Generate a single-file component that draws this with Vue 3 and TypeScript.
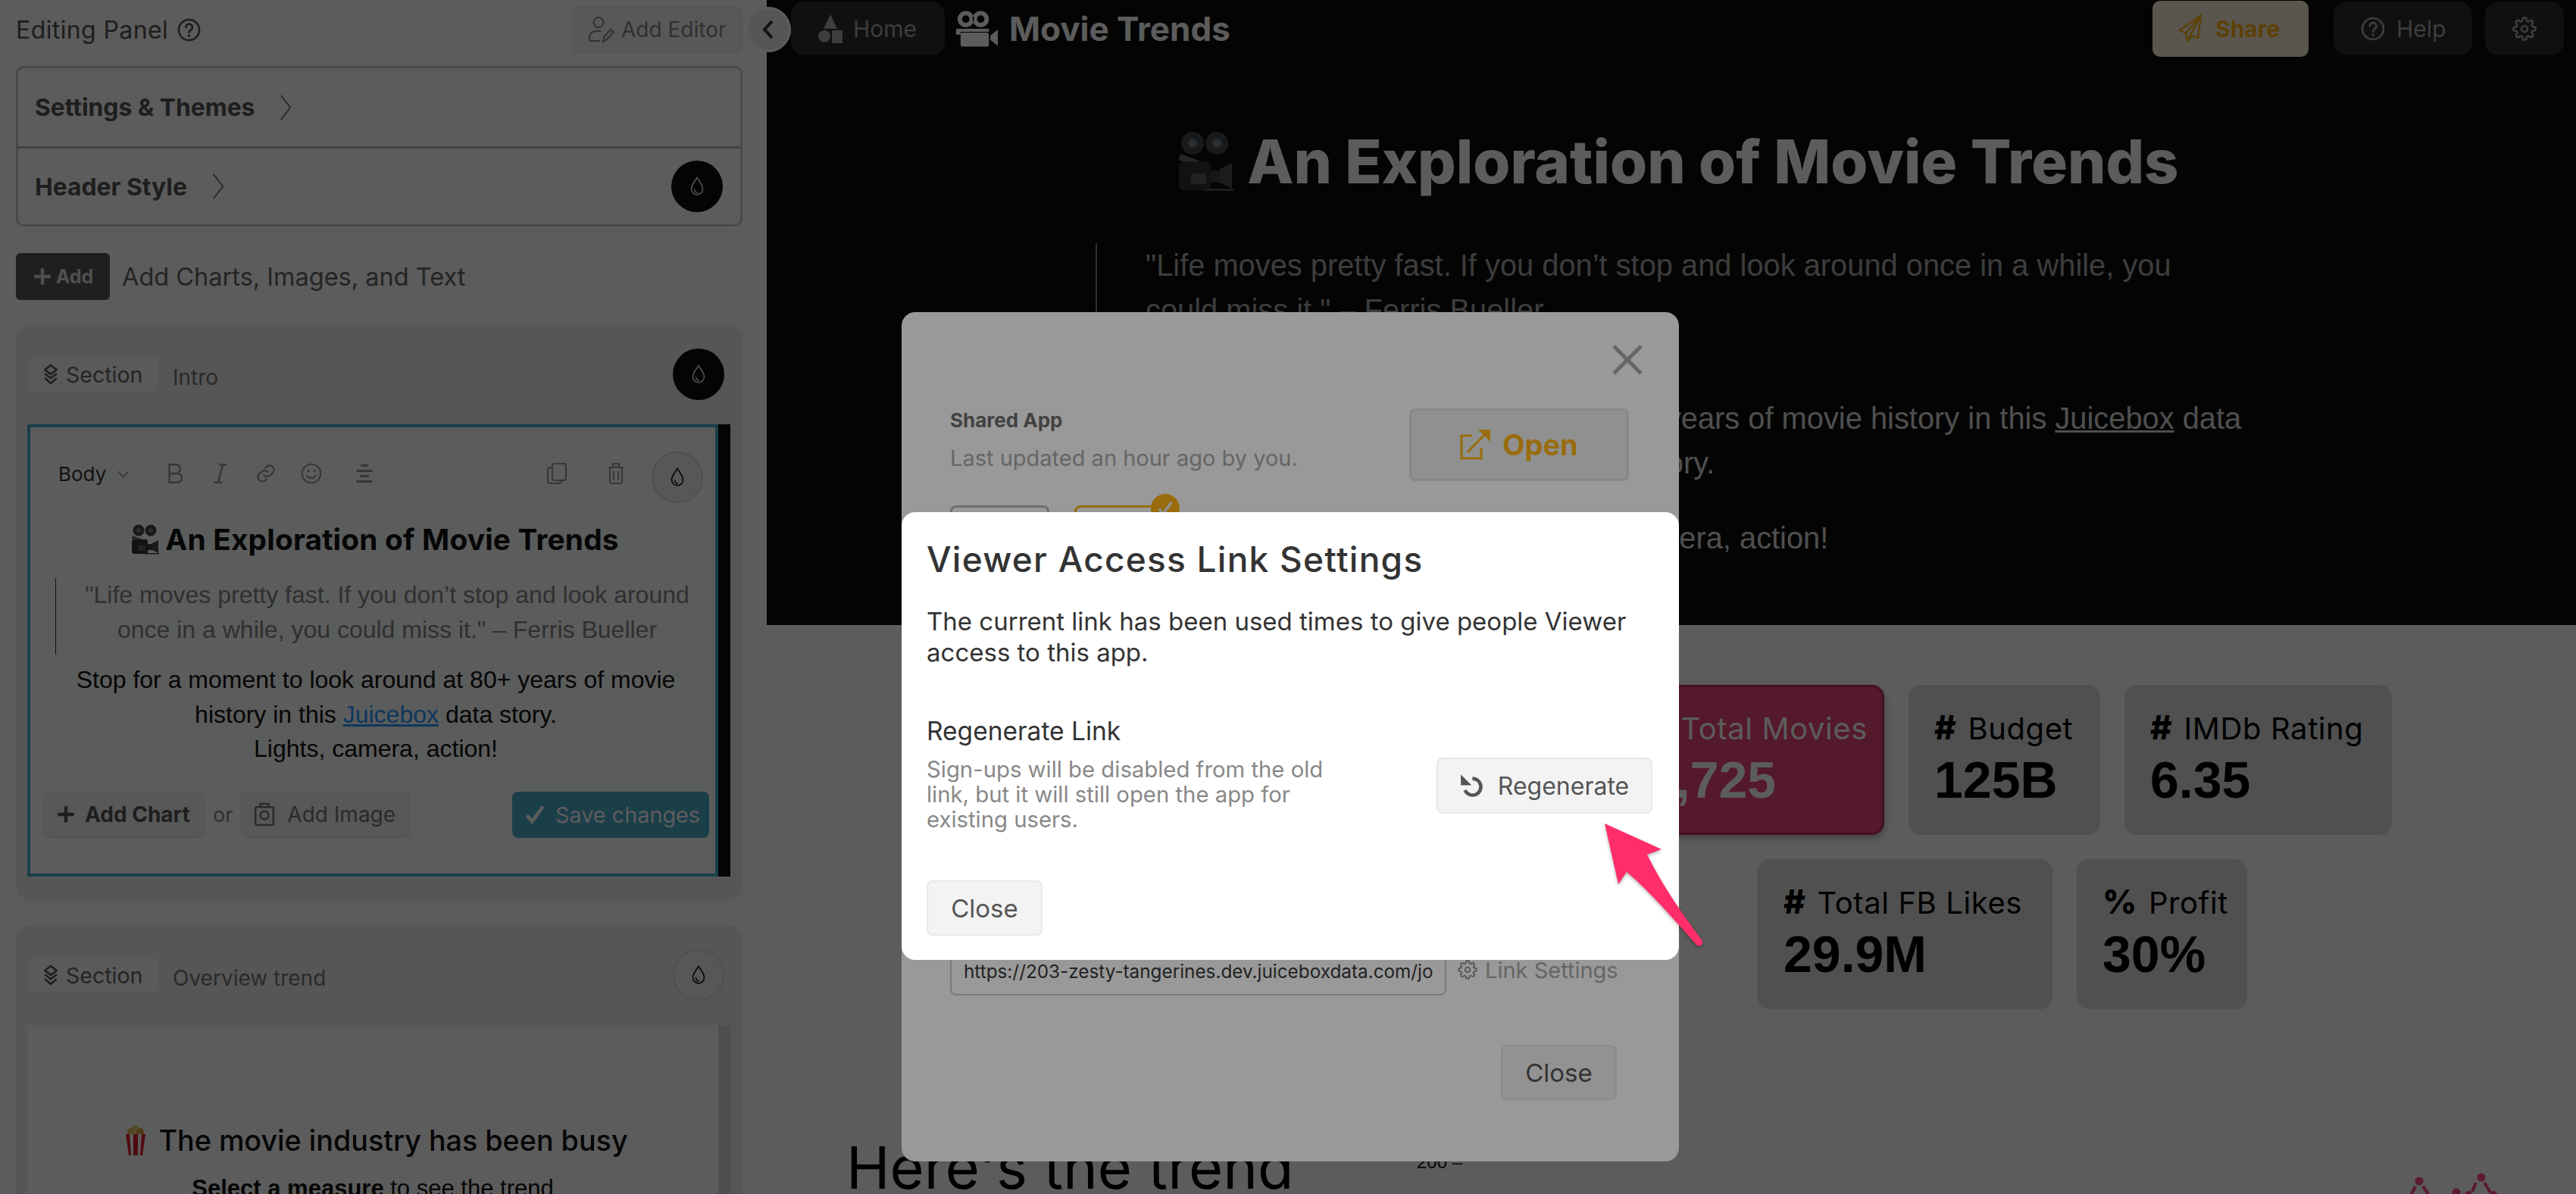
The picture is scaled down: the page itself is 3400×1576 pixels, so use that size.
<script setup lang="ts">
interface Kpi { icon: string; label: string; value: string; cls: string }
const rowOne: Kpi[] = [
  { icon: '#', label: 'Total Movies', value: '4,725', cls: 'active w-total' },
  { icon: '#', label: 'Budget', value: '125B', cls: 'w-budget' },
  { icon: '#', label: 'IMDb Rating', value: '6.35', cls: 'w-imdb' },
]
const rowTwo: Kpi[] = [
  { icon: '#', label: 'Total FB Likes', value: '29.9M', cls: 'w-fb' },
  { icon: '%', label: 'Profit', value: '30%', cls: 'w-profit' },
]
const toolbarIcons: string[] = ['#i-bold', '#i-italic', '#i-link', '#i-smile', '#i-align']
</script>

<template>
  <div class="root">
    <svg class="defs" width="0" height="0" aria-hidden="true">
      <defs>
        <symbol id="i-help" viewBox="0 0 24 24"><circle cx="12" cy="12" r="10.5" fill="none" stroke="currentColor" stroke-width="2"/><path d="M8.8 9.2a3.3 3.3 0 1 1 5 2.9c-1.2.7-1.8 1.3-1.8 2.6" fill="none" stroke="currentColor" stroke-width="2.2" stroke-linecap="round"/><circle cx="12" cy="18" r="1.4" fill="currentColor"/></symbol>
        <symbol id="i-editor" viewBox="0 0 36 36"><g fill="none" stroke="currentColor" stroke-width="2"><circle cx="15" cy="8.5" r="6.5"/><path d="M3 33v-4c0-6 4-9 10-9h5M3 33h14"/><path d="M22 33l-1 1 1-6 9-10 4 3-9 10z"/></g></symbol>
        <symbol id="i-chev" viewBox="0 0 18 40"><path d="M2 2l14 18L2 38" fill="none" stroke="currentColor" stroke-width="1.8"/></symbol>
        <symbol id="i-drop" viewBox="0 0 24 32"><g fill="none" stroke="currentColor" stroke-width="2"><path d="M12 2c4 7 9 12 9 18a9 9 0 0 1-18 0c0-6 5-11 9-18z"/><path d="M8 20a4.500 4.500 0 0 0 5 5.500"/></g></symbol>
        <symbol id="i-layers" viewBox="0 0 28 32"><g fill="none" stroke="currentColor" stroke-width="3" stroke-linejoin="round"><path d="M14 2l9 7-9 7-9-7z"/><path d="M5 15l9 7 9-7"/><path d="M5 22l9 8 9-8"/></g></symbol>
        <symbol id="i-bold" viewBox="0 0 24 28"><path d="M5 3h8a5 5 0 0 1 0 11H5zM5 14h10a5.500 5.500 0 0 1 0 11H5z" fill="none" stroke="currentColor" stroke-width="2.200"/></symbol>
        <symbol id="i-italic" viewBox="0 0 24 28"><path d="M10 3h10M4 25h10M15 3L9 25" fill="none" stroke="currentColor" stroke-width="2.400"/></symbol>
        <symbol id="i-link" viewBox="0 0 24 24"><g fill="none" stroke="currentColor" stroke-width="2" stroke-linecap="round"><path d="M10 14a5 5 0 0 0 7 0l3-3a5 5 0 0 0-7-7l-1.500 1.500"/><path d="M14 10a5 5 0 0 0-7 0l-3 3a5 5 0 0 0 7 7l1.500-1.500"/></g></symbol>
        <symbol id="i-smile" viewBox="0 0 24 24"><circle cx="12" cy="12" r="10.500" fill="none" stroke="currentColor" stroke-width="1.800"/><path d="M7 14.500a6 6 0 0 0 10 0" fill="none" stroke="currentColor" stroke-width="1.800" stroke-linecap="round"/><circle cx="8.500" cy="9" r="1.400" fill="currentColor"/><circle cx="15.500" cy="9" r="1.400" fill="currentColor"/></symbol>
        <symbol id="i-align" viewBox="0 0 24 24"><path d="M8 3h8M3 9h18M7 15h10M3 21h18" fill="none" stroke="currentColor" stroke-width="2.400"/></symbol>
        <symbol id="i-copy" viewBox="0 0 28 30"><g fill="none" stroke="currentColor" stroke-width="2"><rect x="8" y="2" width="18" height="22" rx="3"/><path d="M8 7H5a3 3 0 0 0-3 3v15a3 3 0 0 0 3 3h12a3 3 0 0 0 3-3v-1"/></g></symbol>
        <symbol id="i-trash" viewBox="0 0 24 30"><g fill="none" stroke="currentColor" stroke-width="2"><path d="M2 7h20M8 7V2h8v5M4 7v19a2 2 0 0 0 2 2h12a2 2 0 0 0 2-2V7M9 12v11M15 12v11"/></g></symbol>
        <symbol id="i-plus" viewBox="0 0 24 24"><path d="M12 2v20M2 12h20" fill="none" stroke="currentColor" stroke-width="4"/></symbol>
        <symbol id="i-camera" viewBox="0 0 26 30"><g fill="none" stroke="currentColor" stroke-width="2.400"><rect x="2" y="6" width="22" height="22" rx="2"/><path d="M8 6V2h10v4"/><circle cx="13" cy="16" r="5"/></g></symbol>
        <symbol id="i-check" viewBox="0 0 24 24"><path d="M3 13l6 7L21 3" fill="none" stroke="currentColor" stroke-width="4"/></symbol>
        <symbol id="i-shapes" viewBox="0 0 32 38"><path d="M16 0l9 19H7z" fill="currentColor"/><circle cx="8" cy="29" r="8" fill="currentColor"/><rect x="18" y="21" width="14" height="17" fill="currentColor"/></symbol>
        <symbol id="i-moviecam" viewBox="0 0 56 48"><g fill="currentColor"><path fill-rule="evenodd" d="M13 0a11 11 0 1 1 0 22a11 11 0 0 1 0-22zM13 6a5 5 0 1 0 0 10a5 5 0 0 0 0-10zM33 0a11 11 0 1 1 0 22a11 11 0 0 1 0-22zM33 6a5 5 0 1 0 0 10a5 5 0 0 0 0-10z"/><path d="M0 24h44v4h-38v4H0z"/><rect x="6" y="29" width="38" height="19" rx="3"/><path d="M46 33l10-8v22l-10-8z"/></g></symbol>
        <symbol id="i-plane" viewBox="0 0 32 40"><g fill="none" stroke="currentColor" stroke-width="2.400" stroke-linejoin="round"><path d="M30 2L2 22l8 4 2 10 6-7 8 3z"/><path d="M30 2L10 26M30 2L12 36"/></g></symbol>
        <symbol id="i-gear" viewBox="0 0 24 24"><g fill="none" stroke="currentColor" stroke-width="2"><circle cx="12" cy="12" r="3"/><path d="M19.400 15a1.650 1.650 0 0 0 .33 1.820l.06.06a2 2 0 0 1 0 2.830 2 2 0 0 1-2.830 0l-.06-.06a1.650 1.650 0 0 0-1.820-.33 1.650 1.650 0 0 0-1 1.510V21a2 2 0 0 1-2 2 2 2 0 0 1-2-2v-.09A1.650 1.650 0 0 0 9 19.400a1.650 1.650 0 0 0-1.820.33l-.06.06a2 2 0 0 1-2.830 0 2 2 0 0 1 0-2.830l.06-.06a1.650 1.650 0 0 0 .33-1.820 1.650 1.650 0 0 0-1.510-1H3a2 2 0 0 1-2-2 2 2 0 0 1 2-2h.09A1.650 1.650 0 0 0 4.600 9a1.650 1.650 0 0 0-.33-1.820l-.06-.06a2 2 0 0 1 0-2.830 2 2 0 0 1 2.830 0l.06.06a1.650 1.650 0 0 0 1.820.33H9a1.650 1.650 0 0 0 1-1.510V3a2 2 0 0 1 2-2 2 2 0 0 1 2 2v.09a1.650 1.650 0 0 0 1 1.510 1.650 1.650 0 0 0 1.820-.33l.06-.06a2 2 0 0 1 2.830 0 2 2 0 0 1 0 2.830l-.06.06a1.650 1.650 0 0 0-.33 1.820V9a1.650 1.650 0 0 0 1.510 1H21a2 2 0 0 1 2 2 2 2 0 0 1-2 2h-.09a1.650 1.650 0 0 0-1.510 1z"/></g></symbol>
        <symbol id="i-open" viewBox="0 0 40 40"><g fill="none" stroke="currentColor" stroke-width="3.200"><path d="M16 8H2v30h26V24"/><path d="M10 30L36 3"/></g><path d="M24 0h16v16z" fill="currentColor"/></symbol>
        <symbol id="i-regen" viewBox="0 0 32 32"><path d="M15 7a10 10 0 1 1-9 14" fill="none" stroke="currentColor" stroke-width="4.200"/><path d="M1 2l0 13 13 0z" fill="currentColor"/></symbol>
        <symbol id="e-cam" viewBox="0 0 80 80"><circle cx="24" cy="16" r="15" fill="#42484d"/><circle cx="56" cy="16" r="15" fill="#42484d"/><circle cx="24" cy="16" r="6" fill="#7a8086"/><circle cx="56" cy="16" r="6" fill="#7a8086"/><path d="M6 38l34 12v-8L8 30z" fill="#6a7075"/><rect x="6" y="40" width="42" height="38" rx="6" fill="#2f3438"/><rect x="22" y="56" width="20" height="14" rx="2" fill="#5a6065"/><rect x="48" y="52" width="12" height="16" fill="#3a4044"/><path d="M60 50l16-8v34l-16-8z" fill="#4a5055"/><rect x="40" y="76" width="38" height="3" fill="#4a5055"/></symbol>
        <symbol id="e-pop" viewBox="0 0 32 40"><circle cx="10" cy="9" r="5" fill="#e3b95c"/><circle cx="16" cy="6" r="5.500" fill="#eec771"/><circle cx="22" cy="9" r="5" fill="#d9a94a"/><path d="M3 12h26l-4 28H7z" fill="#fff"/><path d="M3 12h5l2 28H7zM13 12h6v28h-6zM24 12h5l-4 28h-3z" fill="#e02030"/></symbol>
      </defs>
    </svg>

    <aside class="panel">
      <div class="panel-head">
        <span class="panel-title">Editing Panel</span>
        <svg class="ic help-ic"><use href="#i-help"/></svg>
        <span class="spacer"></span>
        <button class="btn-ed"><svg class="ic ed-ic"><use href="#i-editor"/></svg>Add Editor</button>
      </div>

      <div class="accordion">
        <div class="acc-row">
          <strong>Settings &amp; Themes</strong>
          <svg class="ic chev"><use href="#i-chev"/></svg>
        </div>
        <div class="acc-row acc-second">
          <strong>Header Style</strong>
          <svg class="ic chev"><use href="#i-chev"/></svg>
          <span class="spacer"></span>
          <span class="drop dark"><svg class="ic drop-ic"><use href="#i-drop"/></svg></span>
        </div>
      </div>

      <div class="add-row">
        <button class="btn-add"><svg class="ic plus-w"><use href="#i-plus"/></svg>Add</button>
        <span>Add Charts, Images, and Text</span>
      </div>

      <section class="card">
        <div class="card-head">
          <span class="tag"><svg class="ic layer-ic"><use href="#i-layers"/></svg>Section</span>
          <span class="card-name">Intro</span>
          <span class="spacer"></span>
          <span class="drop dark"><svg class="ic drop-ic"><use href="#i-drop"/></svg></span>
        </div>
        <div class="editor-wrap">
          <div class="editor">
            <div class="toolbar">
              <span class="tb-body">Body</span>
              <svg class="chev-down" viewBox="0 0 16 10"><path d="M1 1l7 8 7-8" fill="none" stroke="currentColor" stroke-width="1.500"/></svg>
              <svg v-for="name in toolbarIcons" :key="name" class="ic tb-ic"><use :href="name"/></svg>
              <span class="spacer"></span>
              <svg class="ic tb-ic"><use href="#i-copy"/></svg>
              <svg class="ic tb-ic tb-trash"><use href="#i-trash"/></svg>
              <span class="drop light"><svg class="ic drop-ic"><use href="#i-drop"/></svg></span>
            </div>
            <h2 class="ed-title"><svg class="ic ed-emoji"><use href="#e-cam"/></svg>An Exploration of Movie Trends</h2>
            <blockquote class="ed-quote">"Life moves pretty fast. If you don’t stop and look around once in a while, you could miss it." – Ferris Bueller</blockquote>
            <p class="ed-text">Stop for a moment to look around at 80+ years of movie history in this <a class="ed-link">Juicebox</a> data story.<br>Lights, camera, action!</p>
            <div class="ed-actions">
              <button class="btn-soft strong"><svg class="ic plus-d"><use href="#i-plus"/></svg>Add Chart</button>
              <span class="or">or</span>
              <button class="btn-soft img"><svg class="ic cam-ic"><use href="#i-camera"/></svg>Add Image</button>
              <span class="spacer"></span>
              <button class="btn-save"><svg class="ic check-ic"><use href="#i-check"/></svg>Save changes</button>
            </div>
          </div>
          <div class="stripe"></div>
        </div>
      </section>

      <section class="card second">
        <div class="card-head">
          <span class="tag"><svg class="ic layer-ic"><use href="#i-layers"/></svg>Section</span>
          <span class="card-name">Overview trend</span>
          <span class="spacer"></span>
          <span class="drop light"><svg class="ic drop-ic"><use href="#i-drop"/></svg></span>
        </div>
        <div class="editor-wrap">
          <div class="editor plain">
            <h3 class="ov-title"><svg class="ic pop-ic"><use href="#e-pop"/></svg>The movie industry has been busy</h3>
            <p class="ov-text"><b>Select a measure</b> to see the trend</p>
          </div>
          <div class="stripe pale"></div>
        </div>
      </section>
    </aside>

    <main class="main">
      <div class="hero">
        <header class="topbar">
          <button class="pill home"><svg class="ic home-ic"><use href="#i-shapes"/></svg>Home</button>
          <svg class="ic cam-solid"><use href="#i-moviecam"/></svg>
          <span class="app-name">Movie Trends</span>
          <span class="spacer"></span>
          <button class="share"><svg class="ic plane"><use href="#i-plane"/></svg>Share</button>
          <button class="pill help"><svg class="ic help-top"><use href="#i-help"/></svg>Help</button>
          <button class="pill gear"><svg class="ic gear-ic"><use href="#i-gear"/></svg></button>
        </header>
        <h1 class="hero-title"><svg class="ic hero-emoji"><use href="#e-cam"/></svg>An Exploration of Movie Trends</h1>
        <div class="hero-body">
          <blockquote class="hero-quote">"Life moves pretty fast. If you don’t stop and look around once in a while, you could miss it." – Ferris Bueller</blockquote>
          <p class="hero-text">Stop for a moment to look around at 80+ years of movie history in this <a class="hero-link">Juicebox</a> data story.</p>
          <p class="hero-text last">Lights, camera, action!</p>
        </div>
      </div>

      <div class="kpis">
        <div class="kpi-row r1">
          <div v-for="k in rowOne" :key="k.label" class="kpi" :class="k.cls">
            <div class="kpi-label"><b>{{ k.icon }}</b>{{ k.label }}</div>
            <div class="kpi-value">{{ k.value }}</div>
          </div>
        </div>
        <div class="kpi-row r2">
          <div v-for="k in rowTwo" :key="k.label" class="kpi" :class="k.cls">
            <div class="kpi-label"><b>{{ k.icon }}</b>{{ k.label }}</div>
            <div class="kpi-value">{{ k.value }}</div>
          </div>
        </div>
      </div>

      <div class="trend">
        <h2 class="trend-title">Here's the trend</h2>
        <svg class="chart" viewBox="0 0 1530 76" width="1530" height="76">
          <text x="0" y="42" font-size="24" font-family="Liberation Sans, sans-serif" fill="#111">200 –</text>
          <g fill="#ff4a8e">
            <circle cx="1323" cy="59" r="5.500"/>
            <circle cx="1405" cy="54" r="5.500"/>
            <circle cx="1372" cy="74" r="5.500"/>
            <circle cx="1388" cy="77" r="5"/>
            <circle cx="1421" cy="77" r="5"/>
          </g>
          <g stroke="#ff4a8e" stroke-width="4">
            <path d="M1318 66l-5 10M1328 66l7 10M1398 61l-5 12M1409 61l8 13"/>
          </g>
        </svg>
      </div>
    </main>

    <button class="collapse">
      <svg viewBox="0 0 16 28" class="collapse-ic"><path d="M13 3L3 14l10 11" fill="none" stroke="currentColor" stroke-width="4"/></svg>
    </button>

    <div class="overlay first">
      <div class="modal share-modal">
        <div class="close-row">
          <svg class="close-x" viewBox="0 0 40 40"><path d="M2 2l36 36M38 2L2 38" fill="none" stroke="currentColor" stroke-width="5"/></svg>
        </div>
        <div class="shared-row">
          <div class="shared-info">
            <div class="shared-name">Shared App</div>
            <div class="shared-sub">Last updated an hour ago by you.</div>
          </div>
          <button class="btn-open"><svg class="ic open-ic"><use href="#i-open"/></svg>Open</button>
        </div>
        <div class="radio-row">
          <div class="radio"></div>
          <div class="radio on"><span class="radio-check"><svg class="ic radio-tick"><use href="#i-check"/></svg></span></div>
        </div>
        <div class="url-row">
          <div class="url">https://203-zesty-tangerines.dev.juiceboxdata.com/jo</div>
          <svg class="ic url-gear"><use href="#i-gear"/></svg>
          <span class="url-link">Link Settings</span>
        </div>
        <div class="foot-right"><button class="btn-plain">Close</button></div>
      </div>
    </div>

    <div class="overlay second-layer">
      <div class="modal link-modal">
        <h2 class="lm-title">Viewer Access Link Settings</h2>
        <p class="lm-text">The current link has been used times to give people Viewer access to this app.</p>
        <div class="lm-row">
          <div class="lm-left">
            <div class="lm-sub">Regenerate Link</div>
            <div class="lm-note">Sign-ups will be disabled from the old link, but it will still open the app for existing users.</div>
          </div>
          <button class="btn-plain regen"><svg class="ic regen-ic"><use href="#i-regen"/></svg>Regenerate</button>
        </div>
        <button class="btn-plain lm-close">Close</button>
      </div>
      <svg class="arrow" viewBox="0 0 140 170" width="140" height="170">
        <path d="M1 1L76 35 57 42C80 88 105 122 130 156a5 5 0 0 1-7 6C90 125 60 90 30 65L19 81z" fill="#ff2e6a"/>
      </svg>
    </div>
  </div>
</template>

<style>
html, body { margin: 0; padding: 0; background: #fff; }
</style>

<style scoped>
.root {
  position: relative; display: flex; width: 3400px; height: 1576px; overflow: hidden;
  background: #fff; font-family: Inter, sans-serif; color: #555;
}
.defs { position: absolute; }
.ic { display: block; flex: none; }
.spacer { flex: 1; }
button { font-family: inherit; cursor: pointer; }

/* left panel */
.panel { width: 1012px; flex: none; box-sizing: border-box; padding: 8px 32px 0 21px; background: #fff; }
.panel-head { display: flex; align-items: center; height: 62px; }
.panel-title { font-size: 32px; letter-spacing: .4px; color: #555; }
.help-ic { width: 31px; height: 31px; margin-left: 12px; color: #555; }
.btn-ed { display: flex; align-items: center; width: 224px; height: 62px; padding: 0 0 0 17px; box-sizing: border-box; font-size: 28px; color: #888; background: #f5f5f5; border: 2px solid #eee; border-radius: 8px; white-space: nowrap; }
.ed-ic { width: 36px; height: 36px; margin-right: 9px; }
.accordion { margin-top: 17px; border: 3px solid #ccc; border-radius: 10px; }
.acc-row { display: flex; align-items: center; height: 103px; padding: 0 23px 0 22px; font-size: 31.8px; }
.acc-row strong { color: #555; font-weight: 700; }
.acc-second { height: 100px; border-top: 3px solid #bbb; }
.chev { width: 16px; height: 36px; margin-left: 33px; color: #666; }
.drop { display: flex; align-items: center; justify-content: center; width: 68px; height: 68px; border-radius: 50%; box-sizing: border-box; flex: none; }
.drop.dark { background: #0e0e0e; color: #ddd; }
.drop.light { background: #f3f3f3; border: 2px solid #ddd; color: #111; }
.drop-ic { width: 20px; height: 28px; }
.add-row { display: flex; align-items: center; gap: 16px; margin-top: 35px; font-size: 32.5px; color: #666; }
.btn-add { display: flex; align-items: center; justify-content: center; width: 124px; height: 62px; background: #575757; color: #ddd; font-size: 25px; font-weight: 700; border: 0; border-radius: 6px; padding: 0; }
.plus-w { width: 26px; height: 26px; margin-right: 5px; }
.card { margin-top: 32px; padding: 32px 16px 32px 15px; background: #efefef; border-radius: 20px; }
.card.second { height: 400px; }
.card-head { display: flex; align-items: center; height: 68px; }
.card-head .drop { margin-right: 8px; }
.tag { display: flex; align-items: center; height: 46px; width: 171px; padding-left: 17px; margin-left: 2px; box-sizing: border-box; background: #fbfbfb; border-radius: 6px; font-size: 28.5px; color: #666; }
.layer-ic { width: 24px; height: 28px; margin-right: 8px; color: #555; }
.card-name { margin: 8px 0 0 19px; font-size: 28px; color: #777; }
.editor-wrap { display: flex; margin-top: 32px; }
.editor { flex: 1; box-sizing: border-box; height: 597px; padding: 32px 0 0; border: 4px solid #4eafcd; background: #fdffff; }
.editor.plain { height: 300px; padding-top: 128px; border: 0; background: #fff; text-align: center; }
.stripe { width: 16px; flex: none; background: #0e0e0e; }
.stripe.pale { background: #dcdcdc; }

.toolbar { display: flex; align-items: center; height: 68px; padding: 0 16px 0 37px; color: #999; }
.tb-body { margin-top: -10px; font-size: 26px; color: #333; }
.chev-down { width: 15px; height: 10px; margin: -8px 15px 0 15px; color: #888; }
.tb-ic { width: 28px; height: 30px; margin: -10px 0 0 32px; }
.tb-ic:first-of-type { margin-left: 0; }
.tb-ic:nth-of-type(6) { margin-left: 42px; }
.tb-trash { margin-left: 50px; margin-right: 33px; }
.ed-title { display: flex; align-items: center; justify-content: center; margin: 24px 0 0; height: 48px; padding-left: 4px; font-size: 38.8px; font-weight: 700; letter-spacing: .2px; color: #111; line-height: 48px; white-space: nowrap; }
.ed-emoji { width: 40px; height: 40px; margin-right: 7px; }
.ed-quote { margin: 27px 2px 0 33px; padding: 0 0 10px 6px; border-left: 1px solid #333; font: 32px/45.5px "Liberation Sans", sans-serif; color: #888; text-align: center; }
.ed-text { margin: 11px 26px 0 34px; font: 32px/45.5px "Liberation Sans", sans-serif; color: #111; text-align: center; }
.ed-link { color: #2a98ff; text-decoration: underline; }
.ed-actions { display: flex; align-items: center; margin-top: 33px; padding: 0 8px 0 17px; font-size: 27px; }
.btn-soft { display: flex; align-items: center; box-sizing: border-box; width: 213px; height: 61px; padding: 0 0 0 15px; background: #f3f5f5; color: #777; border: 2px solid #eceeee; border-radius: 8px; font-size: 28px; white-space: nowrap; }
.btn-soft.img { width: 224px; }
.btn-soft.strong { color: #555; font-weight: 700; }
.plus-d { width: 26px; height: 26px; margin-right: 12px; }
.cam-ic { width: 28px; height: 36px; margin-right: 16px; }
.or { margin: 0 11px; color: #888; }
.btn-save { display: flex; align-items: center; width: 260px; height: 61px; padding: 0 0 0 16px; box-sizing: border-box; background: #4eafcd; color: #fff; border: 0; border-radius: 8px; font-size: 28.8px; white-space: nowrap; }
.check-ic { width: 28px; height: 28px; margin-right: 13px; color: #fff; }
.ov-title { display: flex; align-items: center; justify-content: center; margin: 0; padding-left: 8px; font-size: 37.7px; font-weight: 500; color: #111; height: 48px; white-space: nowrap; }
.pop-ic { width: 32px; height: 40px; margin-right: 14px; }
.ov-text { margin: 22px 0 0; font-family: "Liberation Sans", sans-serif; font-size: 31px; color: #111; }

/* main */
.main { flex: 1; min-width: 0; display: flex; flex-direction: column; background: #fff; }
.hero { height: 825px; flex: none; box-sizing: border-box; overflow: hidden; background: #0e0e0e; }
.topbar { display: flex; align-items: center; height: 75px; padding: 0 16px 0 32px; }
.pill { display: flex; align-items: center; height: 71px; border: 0; background: #2d2d2d; border-radius: 18px; color: #aaa; font-size: 30px; }
.home { width: 203px; padding: 0 0 0 36px; box-sizing: border-box; color: #aaa; }
.home-ic { width: 32px; height: 38px; margin-right: 14px; }
.cam-solid { width: 55px; height: 48px; margin-left: 15px; color: #fff; }
.app-name { margin-left: 15px; font-size: 44px; font-weight: 700; color: #fff; }
.share { display: flex; align-items: center; width: 206px; height: 74px; padding: 0 0 0 34px; box-sizing: border-box; background: #faefd9; border: 0; border-radius: 10px; color: #ffb417; font-size: 30px; font-weight: 700; }
.plane { width: 32px; height: 40px; margin-right: 17px; }
.help { width: 183px; margin-left: 33px; padding: 0 0 0 36px; box-sizing: border-box; }
.help-top { width: 32px; height: 32px; margin-right: 15px; }
.gear { width: 104px; margin-left: 17px; justify-content: center; padding: 0; }
.gear-ic { width: 32px; height: 40px; }
.hero-title { display: flex; align-items: center; justify-content: center; height: 90px; margin: 93px 0 0; padding-left: 14px; font-size: 79.5px; font-weight: 800; color: #fff; white-space: nowrap; }
.hero-emoji { width: 80px; height: 80px; margin-right: 16px; }
.hero-body { width: 1534px; margin: 63px 0 0 434px; font-family: "Liberation Sans", sans-serif; font-size: 39.85px; line-height: 59px; }
.hero-quote { margin: 0; padding: 0 66px 16px 64px; border-left: 2px solid #888; color: #aaa; }
.hero-text { margin: 68px 0 0; padding-left: 6px; color: #ddd; text-align: center; }
.hero-text.last { margin-top: 40px; padding-left: 0; }
.hero-link { color: #ddd; text-decoration: underline; }

.kpis { flex: none; padding: 79px 0 0; }
.kpi-row { display: flex; justify-content: flex-end; gap: 32px; }
.kpi-row.r1 { padding-right: 243px; }
.kpi-row.r2 { margin-top: 32px; padding-right: 434px; }
.kpi { box-sizing: border-box; height: 198px; padding: 31px 0 0 34px; background: #dedede; border-radius: 16px; color: #000; white-space: nowrap; }
.kpi.active { background: #ec4875; border: 3px solid #c22e58; color: #fff; padding: 28px 0 0 84px; box-shadow: 0 4px 8px rgba(0,0,0,.3); }
.w-total { width: 400px; }
.w-budget { width: 253px; }
.w-imdb { width: 353px; }
.w-fb { width: 389px; }
.w-profit { width: 225px; }
.kpi-label { font-size: 40px; letter-spacing: .6px; line-height: 50px; }
.kpi-label b { font-size: 44px; margin-right: 15px; font-weight: 800; }
.kpi-value { margin-top: 6px; font: 700 68px/72px "Liberation Sans", sans-serif; }
.trend { flex: 1; min-height: 0; display: flex; align-items: flex-start; padding: 163px 0 0 105px; }
.trend-title { margin: 0; width: 753px; flex: none; font-size: 77.5px; font-weight: 400; line-height: 92px; color: #000; white-space: nowrap; }
.chart { display: block; flex: none; margin-top: 5px; overflow: visible; }

/* collapse */
.collapse { position: absolute; left: 984px; top: 9px; width: 60px; height: 60px; padding: 0; display: flex; align-items: center; justify-content: center; border-radius: 50%; background: #eee; border: 3px solid #fff; box-sizing: border-box; color: #333; }
.collapse-ic { width: 16px; height: 28px; }

/* overlays */
.overlay { position: absolute; inset: 0; display: flex; justify-content: center; align-items: flex-start; padding-left: 6px; background: rgba(0,0,0,.4); }
.modal { width: 1026px; flex: none; box-sizing: border-box; background: #fff; border-radius: 18px; }
.share-modal { margin-top: 412px; height: 1121px; padding: 43px 48px 0 64px; }
.close-row { display: flex; justify-content: flex-end; height: 40px; margin-right: 0; }
.close-x { width: 40px; height: 40px; color: #aaa; }
.shared-row { display: flex; justify-content: space-between; align-items: flex-start; height: 96px; margin: 44px 18px 0 0; }
.shared-name { margin-top: -2px; font-size: 26px; line-height: 36px; font-weight: 700; color: #6f6f6f; }
.shared-sub { margin-top: 14px; font-size: 29px; line-height: 36px; color: #aaa; }
.btn-open { display: flex; align-items: center; justify-content: center; width: 290px; height: 96px; padding: 0; background: #f0f0f0; border: 3px solid #e3e3e3; border-radius: 8px; color: #ffb417; font-size: 38px; font-weight: 700; }
.open-ic { width: 40px; height: 40px; margin-right: 16px; }
.radio-row { display: flex; gap: 33px; margin-top: 32px; }
.radio { position: relative; width: 131px; height: 62px; box-sizing: border-box; border: 3px solid #b8b8b8; border-radius: 8px; }
.radio.on { width: 128px; border-color: #ffb417; }
.radio-check { position: absolute; right: -14px; top: -18px; width: 38px; height: 38px; display: flex; align-items: center; justify-content: center; border-radius: 50%; background: #ffb417; color: #eee; }
.radio-tick { width: 22px; height: 22px; }
.url-row { display: flex; align-items: center; margin-top: 521px; height: 64px; }
.url { width: 655px; height: 64px; box-sizing: border-box; padding: 0 0 0 16px; display: flex; align-items: center; white-space: nowrap; overflow: hidden; border: 2px solid #cbcbcb; border-radius: 8px; font-size: 24.3px; color: #3a3a3a; }
.url-gear { width: 26px; height: 30px; margin: -4px 10px 0 15px; color: #999; }
.url-link { margin-top: -4px; font-size: 29px; color: #aaa; white-space: nowrap; }
.foot-right { display: flex; justify-content: flex-end; margin: 65px 34px 0 0; }
.btn-plain { display: flex; align-items: center; justify-content: center; height: 73px; padding: 0; background: #f3f3f3; border: 2px solid #e8e8e8; border-radius: 8px; color: #555; font-size: 33px; width: 153px; box-sizing: border-box; }

.link-modal { margin-top: 676px; height: 591px; padding: 34px 35px 0 33px; }
.lm-title { margin: 0; font-size: 46px; line-height: 56px; font-weight: 500; letter-spacing: 1.25px; color: #333; white-space: nowrap; }
.lm-text { margin: 34px 0 0; font-size: 33px; line-height: 41px; color: #333; }
.lm-row { display: flex; justify-content: space-between; align-items: flex-end; margin-top: 63px; }
.lm-left { width: 540px; }
.lm-sub { font-size: 33.5px; line-height: 40px; color: #333; }
.lm-note { margin-top: 14px; font-size: 29.3px; line-height: 33px; color: #888; }
.btn-plain.regen { width: 285px; height: 74px; margin-bottom: 24px; font-size: 32px; }
.regen-ic { width: 35px; height: 35px; margin-right: 15px; color: #555; }
.lm-close { margin-top: 64px; }
.arrow { position: absolute; left: 2117px; top: 1086px; filter: drop-shadow(0 2px 2px rgba(0,0,0,.3)); }
</style>
